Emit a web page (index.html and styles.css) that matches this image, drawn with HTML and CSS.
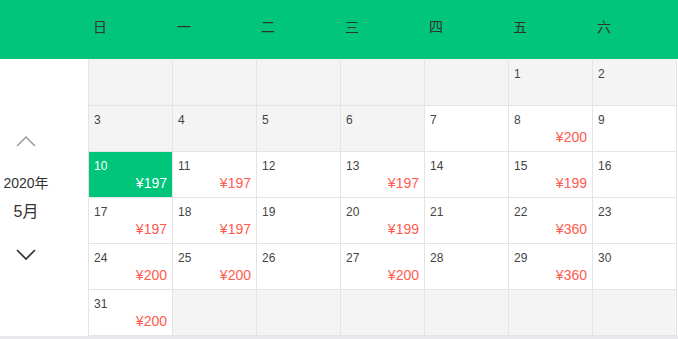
FILE: index.html
```html
<!DOCTYPE html>
<html lang="zh-CN">
<head>
    <meta charset="UTF-8">
    <meta name="viewport" content="width=device-width, initial-scale=1.0">
    <title>日历价格</title>
    <link rel="stylesheet" href="styles.css">
</head>
<body>
    <div class="calendar">
        <div class="week">
            <span></span>
            <span>日</span>
            <span>一</span>
            <span>二</span>
            <span>三</span>
            <span>四</span>
            <span>五</span>
            <span>六</span>
        </div>

        <div class="body">
            <div class="month-nav">
                <svg class="arrow up" width="20" height="12" viewBox="0 0 20 12">
                    <polyline points="1,11 10,2 19,11" fill="none" stroke="#9a9a9a" stroke-width="1.5"/>
                </svg>
                <div class="year">2020年</div>
                <div class="month">5月</div>
                <svg class="arrow down" width="20" height="12" viewBox="0 0 20 12">
                    <polyline points="1,2 10,11 19,2" fill="none" stroke="#333" stroke-width="1.7"/>
                </svg>
            </div>

            <div class="days">
                <div class="day past"></div>
                <div class="day past"></div>
                <div class="day past"></div>
                <div class="day past"></div>
                <div class="day past"></div>
                <div class="day past"><span class="num">1</span></div>
                <div class="day past"><span class="num">2</span></div>

                <div class="day past"><span class="num">3</span></div>
                <div class="day past"><span class="num">4</span></div>
                <div class="day past"><span class="num">5</span></div>
                <div class="day past"><span class="num">6</span></div>
                <div class="day"><span class="num">7</span></div>
                <div class="day"><span class="num">8</span><span class="price">¥200</span></div>
                <div class="day"><span class="num">9</span></div>

                <div class="day active"><span class="num">10</span><span class="price">¥197</span></div>
                <div class="day"><span class="num">11</span><span class="price">¥197</span></div>
                <div class="day"><span class="num">12</span></div>
                <div class="day"><span class="num">13</span><span class="price">¥197</span></div>
                <div class="day"><span class="num">14</span></div>
                <div class="day"><span class="num">15</span><span class="price">¥199</span></div>
                <div class="day"><span class="num">16</span></div>

                <div class="day"><span class="num">17</span><span class="price">¥197</span></div>
                <div class="day"><span class="num">18</span><span class="price">¥197</span></div>
                <div class="day"><span class="num">19</span></div>
                <div class="day"><span class="num">20</span><span class="price">¥199</span></div>
                <div class="day"><span class="num">21</span></div>
                <div class="day"><span class="num">22</span><span class="price">¥360</span></div>
                <div class="day"><span class="num">23</span></div>

                <div class="day"><span class="num">24</span><span class="price">¥200</span></div>
                <div class="day"><span class="num">25</span><span class="price">¥200</span></div>
                <div class="day"><span class="num">26</span></div>
                <div class="day"><span class="num">27</span><span class="price">¥200</span></div>
                <div class="day"><span class="num">28</span></div>
                <div class="day"><span class="num">29</span><span class="price">¥360</span></div>
                <div class="day"><span class="num">30</span></div>

                <div class="day"><span class="num">31</span><span class="price">¥200</span></div>
                <div class="day past"></div>
                <div class="day past"></div>
                <div class="day past"></div>
                <div class="day past"></div>
                <div class="day past"></div>
                <div class="day past"></div>
            </div>
        </div>
    </div>
</body>
</html>
```

FILE: styles.css
```css
html, body {
    margin: 0;
    padding: 0;
    height: 100%;
    overflow: hidden;
    background-color: #e9e9eb;
    font-family: "Liberation Sans", "Noto Sans CJK SC", sans-serif;
    color: #333;
}

.calendar {
    width: 678px;
    background: #fff;
}

/* green weekday header */
.week {
    display: grid;
    grid-template-columns: 88px repeat(7, 84px);
    height: 59px;
    background: #00c57b;
    box-sizing: border-box;
    padding-top: 17px;
}

.week span {
    padding-left: 5px;
    font-size: 14px;
    line-height: 20px;
    color: #333;
}

.body {
    display: flex;
}

/* year / month switcher on the left */
.month-nav {
    width: 52px;
    margin-right: 36px;
    display: flex;
    flex-direction: column;
    align-items: center;
    justify-content: center;
}

.arrow {
    display: block;
    cursor: pointer;
}

.year {
    margin-top: 26px;
    font-size: 14px;
    line-height: 20px;
    color: #333;
}

.month {
    margin-top: 8px;
    font-size: 16px;
    line-height: 22px;
    color: #333;
}

.arrow.down {
    margin-top: 25px;
}

.days {
    display: grid;
    grid-template-columns: repeat(7, 84px);
    border-left: 1px solid #e4e4e4;
    border-top: 1px solid #f4f4f4;
}

.day {
    box-sizing: border-box;
    height: 46px;
    padding: 6px 5px 0 5px;
    border-right: 1px solid #e4e4e4;
    border-bottom: 1px solid #e4e4e4;
    display: flex;
    flex-direction: column;
}

.day.past {
    background: #f4f4f4;
}

.day.active {
    background: #00c57b;
    color: #fff;
}

.num {
    font-size: 12px;
    line-height: 16px;
    color: #444;
}

.price {
    font-size: 14px;
    line-height: 18px;
    text-align: right;
    color: #ff5a4e;
}

.day.active .num,
.day.active .price {
    color: #fff;
}
```
